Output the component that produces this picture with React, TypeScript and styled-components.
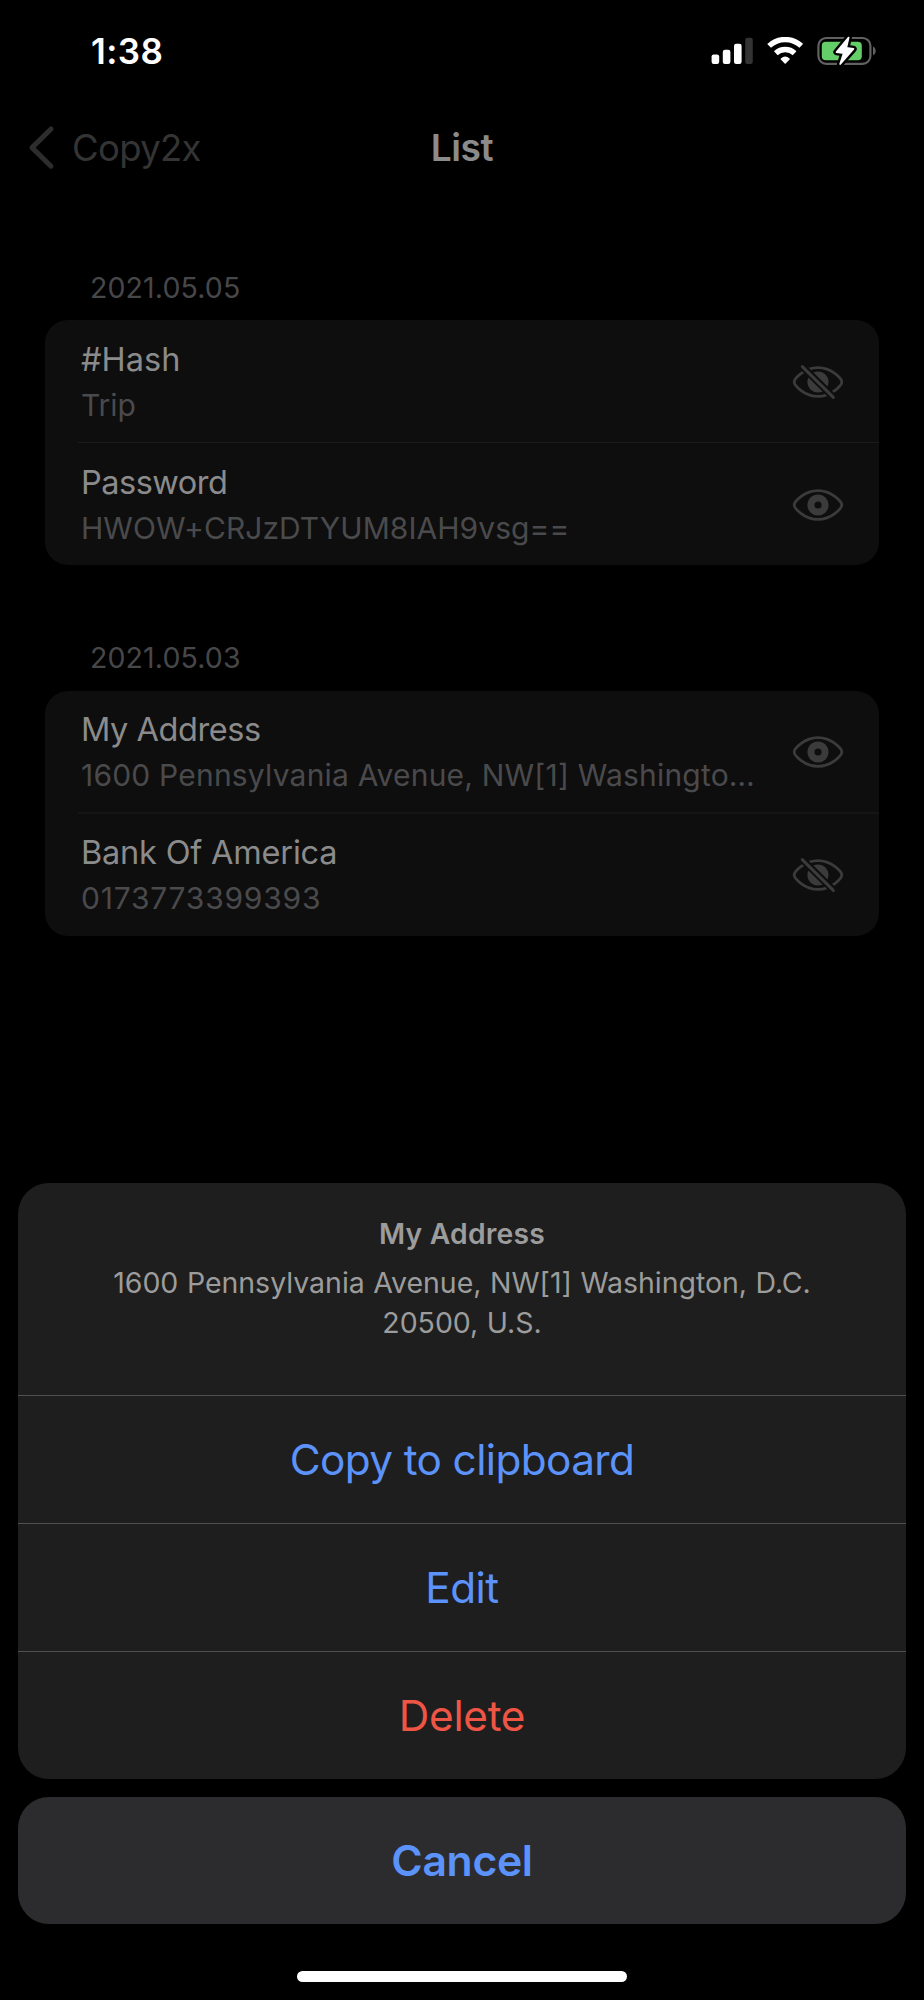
import React from 'react';
import styled, { createGlobalStyle } from 'styled-components';

const GlobalStyle = createGlobalStyle`
  html, body {
    margin: 0;
    background: #000;
  }
  * {
    box-sizing: border-box;
  }
  button {
    margin: 0;
    padding: 0;
    border: 0;
    background: none;
    font: inherit;
    color: inherit;
  }
  h1, h2, p {
    margin: 0;
    font: inherit;
  }
`;

const Screen = styled.div`
  position: relative;
  display: flex;
  flex-direction: column;
  width: 924px;
  height: 2000px;
  overflow: hidden;
  background: #000;
  font-family: Inter, 'Liberation Sans', sans-serif;
`;

const StatusBar = styled.header`
  display: flex;
  align-items: center;
  justify-content: space-between;
  height: 101px;
  padding: 0 47px 0 91px;
`;

const Clock = styled.time`
  font-size: 35px;
  font-weight: 600;
  line-height: 44px;
  letter-spacing: 0.4px;
  color: #fff;
`;

const StatusIcons = styled.div`
  display: flex;
  align-items: center;
  gap: 14px;
  svg {
    display: block;
  }
`;

const NavBar = styled.nav`
  display: grid;
  grid-template-columns: 1fr auto 1fr;
  align-items: center;
  height: 93px;
  padding: 0 28px;
`;

const BackButton = styled.button`
  display: flex;
  align-items: center;
  gap: 16px;
  font-size: 36.5px;
  line-height: 46px;
  letter-spacing: -0.67px;
  color: #343434;
`;

const NavTitle = styled.h1`
  font-size: 37.2px;
  font-weight: 600;
  line-height: 46px;
  letter-spacing: -0.5px;
  color: #8b8b8b;
`;

const List = styled.main`
  display: flex;
  flex-direction: column;
  gap: 61px;
  padding: 62px 45px 0;
`;

const Section = styled.section`
  display: flex;
  flex-direction: column;
  & + & > h2 {
    height: 65px;
  }
`;

const SectionDate = styled.h2`
  height: 64px;
  padding: 12px 0 0 45px;
  font-size: 28.5px;
  line-height: 40px;
  letter-spacing: 0.12px;
  color: #474749;
`;

const Card = styled.div`
  height: 245px;
  border-radius: 23px;
  background: #0e0e0e;
`;

const Row = styled.div<{ $height: number; $divider?: number }>`
  display: flex;
  align-items: center;
  justify-content: space-between;
  height: ${(p) => p.$height}px;
  margin-left: 33px;
  padding: 2px 35px 0 3px;
  border-top: ${(p) => p.$divider ?? 0}px solid ${(p) => (p.$divider === 2 ? '#151515' : '#1b1b1b')};
`;

const RowText = styled.div`
  display: flex;
  flex-direction: column;
`;

const RowTitle = styled.span<{ $tracking: number }>`
  font-size: 32.5px;
  line-height: 45px;
  letter-spacing: ${(p) => p.$tracking}px;
  color: #8b8b8b;
`;

const RowDetail = styled.span<{ $tracking: number }>`
  font-size: 30px;
  line-height: 46px;
  letter-spacing: ${(p) => p.$tracking}px;
  white-space: nowrap;
  color: #4a4a4c;
`;

const EyeButton = styled.button`
  display: flex;
  padding-bottom: 1px;
  color: #3b3b3b;
`;

const ActionSheet = styled.div`
  position: absolute;
  left: 18px;
  right: 18px;
  top: 1183px;
  display: flex;
  flex-direction: column;
  align-items: stretch;
  gap: 18px;
`;

const SheetGroup = styled.div`
  border-radius: 31px;
  background: #1e1e1e;
  text-align: center;
`;

const SheetHeader = styled.div`
  height: 212px;
  padding: 31px 80px 0;
  color: #9c9c9c;
`;

const SheetTitle = styled.h2`
  font-size: 28.3px;
  font-weight: 600;
  line-height: 40px;
  letter-spacing: 0.2px;
`;

const SheetMessage = styled.p`
  margin-top: 9px;
  font-size: 28.5px;
  line-height: 40px;
  letter-spacing: -0.03px;
  word-spacing: 0.6px;
`;

const SheetAction = styled.button<{ $tone: string; $tracking: number }>`
  display: flex;
  align-items: center;
  justify-content: center;
  width: 100%;
  height: 128px;
  border-top: 1px solid #505050;
  font-size: 42.3px;
  letter-spacing: ${(p) => p.$tracking}px;
  color: ${(p) => p.$tone};
`;

const CancelButton = styled.button`
  display: flex;
  align-items: center;
  justify-content: center;
  height: 127px;
  border-radius: 31px;
  background: #2c2c2e;
  font-size: 42.7px;
  font-weight: 600;
  letter-spacing: -0.35px;
  color: #5c93fb;
`;

const HomeIndicator = styled.div`
  width: 330px;
  height: 11px;
  margin: auto auto 18px;
  border-radius: 6px;
  background: #fff;
`;

const SignalIcon = () => (
  <svg width="42" height="28" viewBox="0 0 42 28">
    <g fill="#fff">
      <rect x="0.6" y="17.4" width="7.6" height="9.6" rx="2.2" />
      <rect x="11.8" y="12.7" width="7.6" height="14.3" rx="2.2" />
      <rect x="23" y="6.8" width="7.6" height="20.2" rx="2.2" />
    </g>
    <rect x="34.2" y="0.7" width="7.6" height="26.3" rx="2.2" fill="#333" />
  </svg>
);

const WifiIcon = () => (
  <svg width="36" height="28" viewBox="0 0 36 28">
    <g fill="none" stroke="#fff" strokeWidth="5.4">
      <path d="M2.1 8.9A23.5 23.5 0 0 1 34.3 8.9" />
      <path d="M8.8 16.3A13.7 13.7 0 0 1 27.6 16.3" />
    </g>
    <path
      d="M14.3 22Q18.2 18.7 22.1 22L18.2 26Z"
      fill="#fff"
      stroke="#fff"
      strokeWidth="1.4"
      strokeLinejoin="round"
    />
  </svg>
);

const BOLT = 'M31.6 1.6L19.6 16L26.8 17L23.2 28L36.4 13L29.2 12Z';

const BatteryIcon = () => (
  <svg width="60" height="30" viewBox="0 0 60 30">
    <rect x="1.4" y="2" width="52" height="25.8" rx="7.8" fill="none" stroke="#616161" strokeWidth="2.2" />
    <path d="M56 10.5C59.6 11.7 59.6 18.1 56 19.3Z" fill="#616161" />
    <rect x="4.8" y="5.7" width="40" height="18.6" rx="4" fill="#64ce69" />
    <path d={BOLT} fill="#000" stroke="#000" strokeWidth="6.6" strokeLinejoin="round" />
    <path d={BOLT} fill="#fff" stroke="#fff" strokeWidth="1.8" strokeLinejoin="round" />
  </svg>
);

const ChevronIcon = () => (
  <svg width="28" height="46" viewBox="0 0 28 46">
    <path
      d="M23 4L4 22.6L23 41.2"
      fill="none"
      stroke="#2d2d2d"
      strokeWidth="5"
      strokeLinecap="round"
      strokeLinejoin="round"
    />
  </svg>
);

const EYE = 'M2.2 18C2.2 15 12 3.6 26 3.6S49.8 15 49.8 18S40 32.4 26 32.4S2.2 21 2.2 18Z';

const EyeIcon = ({ id, hidden }: { id: string; hidden: boolean }) => (
  <svg width="52" height="36" viewBox="0 0 52 36">
    <mask id={id} maskUnits="userSpaceOnUse" x="0" y="0" width="52" height="36">
      <rect width="52" height="36" fill="#fff" />
      {hidden ? (
        <path d="M5.5 -2.2L46.5 38.2" stroke="#000" strokeWidth="7.2" />
      ) : (
        <circle cx="26" cy="18" r="3.6" fill="#000" />
      )}
    </mask>
    <g mask={`url(#${id})`}>
      <path d={EYE} fill="none" stroke="currentColor" strokeWidth="2.8" />
      <circle cx="26" cy="18" r="10.6" fill="currentColor" />
    </g>
    {hidden && (
      <path d="M10.3 2.6L41.3 33.4" stroke="currentColor" strokeWidth="3" strokeLinecap="round" />
    )}
  </svg>
);

type Item = {
  title: string;
  titleTracking: number;
  detail: string;
  detailTracking: number;
  hidden: boolean;
  height: number;
  divider?: number;
};

const sections: { date: string; items: Item[] }[] = [
  {
    date: '2021.05.05',
    items: [
      {
        title: '#Hash',
        titleTracking: 0,
        detail: 'Trip',
        detailTracking: -0.1,
        hidden: true,
        height: 122,
      },
      {
        title: 'Password',
        titleTracking: -0.5,
        detail: 'HWOW+CRJzDTYUM8IAH9vsg==',
        detailTracking: 0.05,
        hidden: false,
        height: 123,
        divider: 1,
      },
    ],
  },
  {
    date: '2021.05.03',
    items: [
      {
        title: 'My Address',
        titleTracking: -0.45,
        detail: '1600 Pennsylvania Avenue, NW[1] Washingto…',
        detailTracking: 0.2,
        hidden: false,
        height: 121,
      },
      {
        title: 'Bank Of America',
        titleTracking: -0.2,
        detail: '0173773399393',
        detailTracking: 0.78,
        hidden: true,
        height: 123,
        divider: 2,
      },
    ],
  },
];

const actions = [
  { label: 'Copy to clipboard', tone: '#5c93fb', tracking: -0.6 },
  { label: 'Edit', tone: '#5c93fb', tracking: -0.5 },
  { label: 'Delete', tone: '#ef5545', tracking: -0.3 },
];

export default function App() {
  return (
    <Screen>
      <GlobalStyle />
      <StatusBar>
        <Clock>1:38</Clock>
        <StatusIcons>
          <SignalIcon />
          <WifiIcon />
          <BatteryIcon />
        </StatusIcons>
      </StatusBar>
      <NavBar>
        <BackButton>
          <ChevronIcon />
          Copy2x
        </BackButton>
        <NavTitle>List</NavTitle>
      </NavBar>
      <List>
        {sections.map((section) => (
          <Section key={section.date}>
            <SectionDate>{section.date}</SectionDate>
            <Card>
              {section.items.map((item) => (
                <Row key={item.title} $height={item.height} $divider={item.divider}>
                  <RowText>
                    <RowTitle $tracking={item.titleTracking}>{item.title}</RowTitle>
                    <RowDetail $tracking={item.detailTracking}>{item.detail}</RowDetail>
                  </RowText>
                  <EyeButton>
                    <EyeIcon id={`eye-${item.title.length}`} hidden={item.hidden} />
                  </EyeButton>
                </Row>
              ))}
            </Card>
          </Section>
        ))}
      </List>
      <HomeIndicator />
      <ActionSheet>
        <SheetGroup>
          <SheetHeader>
            <SheetTitle>My Address</SheetTitle>
            <SheetMessage>1600 Pennsylvania Avenue, NW[1] Washington, D.C. 20500, U.S.</SheetMessage>
          </SheetHeader>
          {actions.map((action) => (
            <SheetAction key={action.label} $tone={action.tone} $tracking={action.tracking}>
              {action.label}
            </SheetAction>
          ))}
        </SheetGroup>
        <CancelButton>Cancel</CancelButton>
      </ActionSheet>
    </Screen>
  );
}
